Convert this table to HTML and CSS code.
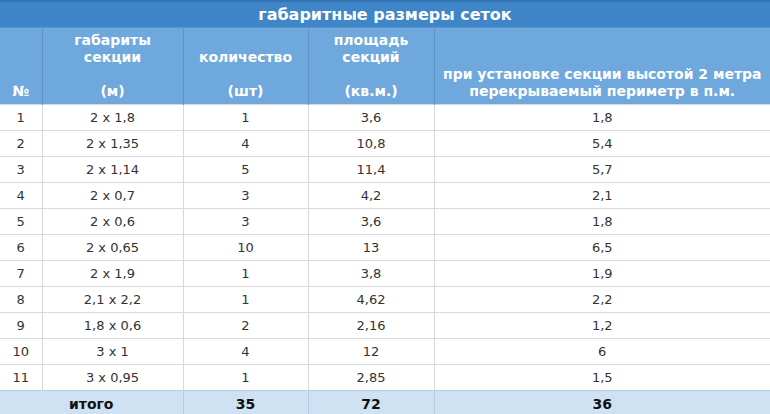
FILE: index.html
```html
<!DOCTYPE html>
<html lang="ru">
<head>
<meta charset="utf-8">
<link rel="stylesheet" href="styles.css">
</head>
<body>
<table class="grid">
  <colgroup>
    <col class="c1"><col class="c2"><col class="c3"><col class="c4"><col class="c5">
  </colgroup>
  <thead>
    <tr class="title"><th colspan="5">габаритные размеры сеток</th></tr>
    <tr class="head">
      <th><span class="l"></span><span class="l"></span><span class="l"></span><span class="l">№</span></th>
      <th><span class="l">габариты</span><span class="l">секции</span><span class="l"></span><span class="l">(м)</span></th>
      <th><span class="l"></span><span class="l">количество</span><span class="l"></span><span class="l">(шт)</span></th>
      <th><span class="l">площадь</span><span class="l">секций</span><span class="l"></span><span class="l">(кв.м.)</span></th>
      <th><span class="l"></span><span class="l"></span><span class="l">при установке секции высотой 2 метра</span><span class="l">перекрываемый периметр в п.м.</span></th>
    </tr>
  </thead>
  <tbody>
    <tr><td>1</td><td>2 x 1,8</td><td>1</td><td>3,6</td><td>1,8</td></tr>
    <tr><td>2</td><td>2 x 1,35</td><td>4</td><td>10,8</td><td>5,4</td></tr>
    <tr><td>3</td><td>2 x 1,14</td><td>5</td><td>11,4</td><td>5,7</td></tr>
    <tr><td>4</td><td>2 x 0,7</td><td>3</td><td>4,2</td><td>2,1</td></tr>
    <tr><td>5</td><td>2 x 0,6</td><td>3</td><td>3,6</td><td>1,8</td></tr>
    <tr><td>6</td><td>2 x 0,65</td><td>10</td><td>13</td><td>6,5</td></tr>
    <tr><td>7</td><td>2 x 1,9</td><td>1</td><td>3,8</td><td>1,9</td></tr>
    <tr><td>8</td><td>2,1 x 2,2</td><td>1</td><td>4,62</td><td>2,2</td></tr>
    <tr><td>9</td><td>1,8 x 0,6</td><td>2</td><td>2,16</td><td>1,2</td></tr>
    <tr><td>10</td><td>3 x 1</td><td>4</td><td>12</td><td>6</td></tr>
    <tr><td>11</td><td>3 x 0,95</td><td>1</td><td>2,85</td><td>1,5</td></tr>
  </tbody>
  <tfoot>
    <tr class="total"><td colspan="2">итого</td><td>35</td><td>72</td><td>36</td></tr>
  </tfoot>
</table>
</body>
</html>
```
FILE: styles.css
```css
html, body {
  margin: 0;
  padding: 0;
  background: #ffffff;
}
.grid {
  width: 770px;
  border-collapse: collapse;
  table-layout: fixed;
  font-family: "DejaVu Sans", "Noto Sans", sans-serif;
}
.c1 { width: 42px; }
.c2 { width: 141px; }
.c3 { width: 125px; }
.c4 { width: 126px; }
.c5 { width: 336px; }

.title th {
  height: 25px;
  padding: 0;
  background: #3f86c8;
  border-top: 2px solid #3374b2;
  color: #ffffff;
  font-size: 16px;
  font-weight: bold;
  text-align: center;
  vertical-align: middle;
}
.head th {
  height: 77px;
  padding: 4px 0 0;
  box-sizing: border-box;
  background: #6fa8dc;
  border-left: 1px solid #5e95c9;
  border-top: 1px solid #5a93c9;
  color: #ffffff;
  font-size: 14px;
  font-weight: bold;
  text-align: center;
  vertical-align: top;
}
.head th:first-child { border-left: none; }
.head .l {
  display: block;
  height: 17px;
  line-height: 17px;
  white-space: nowrap;
}
tbody td {
  height: 25px;
  padding: 0;
  border-top: 1px solid #d9d9d9;
  border-left: 1px solid #d9d9d9;
  color: #333333;
  font-size: 13px;
  font-weight: normal;
  text-align: center;
  vertical-align: middle;
}
tbody td:first-child { border-left: none; }
.total td {
  height: 25px;
  padding: 0;
  background: #cfe2f3;
  border-top: 1px solid #b9cde0;
  border-left: 1px solid #b6cbe0;
  color: #111111;
  font-size: 14px;
  font-weight: bold;
  text-align: center;
  vertical-align: middle;
}
.total td:first-child { border-left: none; }
```
